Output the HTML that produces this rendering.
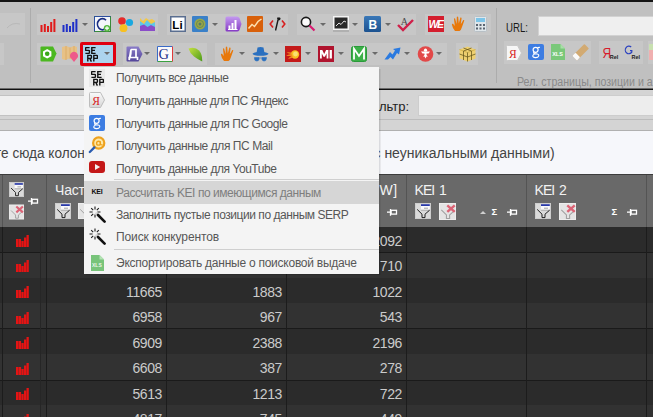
<!DOCTYPE html>
<html><head><meta charset="utf-8">
<style>
*{margin:0;padding:0;box-sizing:border-box}
html,body{width:653px;height:417px;overflow:hidden;background:#c0c0c0;font-family:"Liberation Sans",sans-serif}
.a{position:absolute}
.pn{position:absolute;background:#c7c7c7}
.arr{position:absolute;width:0;height:0;border-left:3px solid transparent;border-right:3px solid transparent;border-top:3px solid #6a6a6a}
.sep{position:absolute;width:1px;background:#acacac}
.mi{position:absolute;left:116px;font-size:12px;color:#575757;white-space:nowrap;line-height:14px}
.num{position:absolute;font-size:14px;letter-spacing:-0.4px;color:#cbcbcb;text-align:right;line-height:16px;white-space:nowrap}
.row{position:absolute;left:0;width:653px}
.vl{position:absolute;width:1px;background:#1c1c1c}
.hdv{position:absolute;width:1px;background:#545454;top:175px;height:52px}
.ht{position:absolute;color:#f2f2f2;font-size:14px;line-height:16px;white-space:nowrap;letter-spacing:-0.95px;word-spacing:1.8px}
</style></head><body>
<!-- top black line -->
<div class="a" style="left:0;top:0;width:653px;height:2px;background:#141414"></div>

<!-- toolbar -->
<div class="a" style="left:0;top:13px;width:24.5px;height:22px;background:#c7c7c7"></div><svg class="a" style="left:6px;top:20px" width="16" height="10" viewBox="0 0 16 10"><path d="M1 8 Q6 2 14 4" fill="none" stroke="#b8b8b8" stroke-width="1"/></svg>
<div class="a" style="left:0;top:43px;width:3.5px;height:21.5px;background:#c7c7c7"></div>
<div class="sep" style="left:30px;top:8px;height:75px"></div>
<div class="sep" style="left:496px;top:8px;height:75px"></div>

<div class="pn" style="left:37px;top:13.5px;width:121px;height:21.5px"></div>
<div class="pn" style="left:167px;top:13.5px;width:121px;height:21.5px"></div>
<div class="pn" style="left:297px;top:13.5px;width:119px;height:21.5px"></div>
<div class="pn" style="left:425px;top:13.5px;width:66px;height:21.5px"></div>

<div class="pn" style="left:37px;top:42.5px;width:44px;height:22.5px"></div>
<div class="pn" style="left:123px;top:42.5px;width:84px;height:22.5px"></div>
<div class="pn" style="left:215px;top:42.5px;width:232px;height:22.5px"></div>
<div class="pn" style="left:456px;top:42.5px;width:22px;height:22.5px"></div>

<!-- SERP button highlight -->
<div class="a" style="left:80px;top:42px;width:36px;height:23.5px;border:3px solid #e10010;border-radius:2px;background:#acd4ee"></div>
<!-- TOOLBAR ICONS ROW 1 -->
<svg class="a" style="left:40px;top:18px" width="16" height="14" viewBox="0 0 16 14"><path d="M0.5 7h2v7h-2z M3.8 6h2v8h-2z M7 8h2v6H7z M10.2 4h2v10h-2z M13.4 1h2v13h-2z" fill="#e01a1a"/></svg>
<svg class="a" style="left:62px;top:18px" width="16" height="14" viewBox="0 0 16 14"><path d="M0.5 7h2v7h-2z M3.8 6h2v8h-2z M7 8h2v6H7z M10.2 4h2v10h-2z M13.4 1h2v13h-2z" fill="#2030c8"/></svg>
<div class="arr" style="left:82px;top:23px"></div>
<svg class="a" style="left:94px;top:16px" width="17" height="16" viewBox="0 0 17 16"><rect x="0.5" y="0.5" width="16" height="15" fill="#f4f6fa" stroke="#3a8a3a"/><path d="M0.5 15.5V0.5H16.5" fill="none" stroke="#2d4e9e"/><path d="M12 4.2 A5 5.6 0 1 0 11.8 12.4" fill="none" stroke="#1a2c80" stroke-width="1.7"/><circle cx="13" cy="12.2" r="3.2" fill="#56b840"/><path d="M11 12.2h4M13 10.2v4" stroke="#fff" stroke-width="1.2"/></svg>
<svg class="a" style="left:117px;top:16px" width="17" height="17" viewBox="0 0 17 17"><circle cx="5" cy="5" r="3.8" fill="#e62a2a"/><circle cx="12.5" cy="6.5" r="3.6" fill="#1aa8e0"/><circle cx="6.5" cy="12.2" r="3.9" fill="#f8c020"/></svg>
<svg class="a" style="left:140px;top:17px" width="15" height="14" viewBox="0 0 15 14"><path d="M0 1 L3 4 L6 1 L9 3 L12 2 L15 4 V14 H0z" fill="#f2c84a"/><path d="M0 4 L4 7 L7 3 L11 7 L15 5 V14 H0z" fill="#5ec8e8"/><path d="M0 9 L4 7.5 L7.5 10 L11 8 L15 10 V14 H0z" fill="#8a4cc8"/></svg>

<svg class="a" style="left:170px;top:16px" width="16" height="16" viewBox="0 0 16 16"><rect x="0.75" y="0.75" width="14.5" height="14.5" fill="#fff" stroke="#5a6e90" stroke-width="1.5"/><text x="2.3" y="12.6" font-family="Liberation Sans" font-weight="bold" font-size="11.5" fill="#000" letter-spacing="0.3">Li</text></svg>
<svg class="a" style="left:192px;top:16px" width="16" height="16" viewBox="0 0 16 16"><rect x="0" y="0" width="16" height="16" rx="1" fill="#3a80c8"/><circle cx="8" cy="8" r="5.5" fill="#9aa848"/><circle cx="8" cy="8" r="3.5" fill="none" stroke="#6a8a50" stroke-width="1"/><circle cx="8" cy="8" r="1.5" fill="#5a7a60"/></svg>
<div class="arr" style="left:212px;top:23px"></div>
<svg class="a" style="left:225px;top:16px" width="17" height="16" viewBox="0 0 17 16"><defs><linearGradient id="pt" x1="0" y1="0" x2="0" y2="1"><stop offset="0" stop-color="#c49af0"/><stop offset="1" stop-color="#8438c4"/></linearGradient></defs><path d="M2 0.5 H12 Q13.5 0.5 14.5 2 L16.5 8 L14.5 14 Q13.5 15.5 12 15.5 H2 Q0.5 15.5 0.5 14 V2 Q0.5 0.5 2 0.5z" fill="url(#pt)"/><path d="M3.5 9.5h2v3.5h-2z M6.5 7h2v6h-2z M9.5 4h2v9h-2z M3 13h9.5v1H3z" fill="#fff"/></svg>
<svg class="a" style="left:247px;top:16px" width="16" height="16" viewBox="0 0 16 16"><rect width="16" height="16" rx="1" fill="#d8600a"/><path d="M1.5 12.5 L5 8.5 L7.5 10.5 L11 5.5 L14.5 3" fill="none" stroke="#fde0b0" stroke-width="1.5"/></svg>
<svg class="a" style="left:269px;top:16px" width="17" height="16" viewBox="0 0 17 16"><path d="M4 4.5 L1.2 8 L4 11.5 M13 4.5 L15.8 8 L13 11.5" fill="none" stroke="#d82020" stroke-width="1.6"/><path d="M11 1.5 Q8.5 1 8.3 3.8 L6 13.5 Q6 15 7.3 14.5 L9.6 4.5 Q11.5 4.5 11.6 2.5z" fill="#1a1a1a"/><path d="M8.2 2.2 L9.8 2.2" stroke="#1a1a1a" stroke-width="1.5"/></svg>

<svg class="a" style="left:300px;top:16px" width="16" height="16" viewBox="0 0 16 16"><circle cx="6" cy="6" r="4.6" fill="#fbfbfb" stroke="#1a1a1a" stroke-width="1.6"/><path d="M9.5 9.5 L14.5 14.5" stroke="#d81a70" stroke-width="2.2"/></svg>
<div class="arr" style="left:320px;top:23px"></div>
<svg class="a" style="left:333px;top:16px" width="16" height="16" viewBox="0 0 16 16"><rect x="0" y="14" width="16" height="2" fill="#a0a0a0" opacity="0.6"/><rect x="0.75" y="0.75" width="14.5" height="12.5" fill="#2a2a2a" stroke="#f4f4f4" stroke-width="1.5"/><path d="M3 10 L6 7 L8 8.5 L11 5 L13 6" fill="none" stroke="#e0e0e0" stroke-width="1"/></svg>
<div class="arr" style="left:352px;top:23px"></div>
<svg class="a" style="left:364px;top:16px" width="17" height="16" viewBox="0 0 17 16"><defs><linearGradient id="vk" x1="0" y1="0" x2="0" y2="1"><stop offset="0" stop-color="#3a78b8"/><stop offset="1" stop-color="#1c5290"/></linearGradient></defs><rect width="17" height="16" rx="1.5" fill="url(#vk)"/><text x="4.6" y="12.8" font-family="Liberation Sans" font-weight="bold" font-size="12" fill="#fff">B</text></svg>
<div class="arr" style="left:385px;top:23px"></div>
<svg class="a" style="left:397px;top:16px" width="17" height="16" viewBox="0 0 17 16"><text x="3.8" y="8.6" font-family="Liberation Serif" font-size="10" fill="#4a4a4a">A</text><path d="M1 9 L6 14 L16 4" fill="none" stroke="#d0204a" stroke-width="2.4"/></svg>

<svg class="a" style="left:428px;top:16px" width="16" height="16" viewBox="0 0 16 16"><rect width="16" height="16" fill="#d41e2e"/><text x="0.6" y="12" font-family="Liberation Sans" font-weight="bold" font-style="italic" font-size="10.5" fill="#fff" letter-spacing="-1.6">WE</text></svg>
<svg class="a" style="left:451px;top:16px" width="15" height="16" viewBox="0 0 15 16"><path d="M4 15 Q1.5 12 1 9 Q0.6 7.5 2 7.8 L3.8 10 L3 3 Q3 2 4 2.2 L5.6 8 L5.8 1 Q6.5 0 7.2 1 L7.8 7.6 L9.4 1.6 Q10.3 1 10.6 2 L9.8 8.3 L12.3 4 Q13.3 3.6 13.3 4.6 L11 11 Q10 14.5 8.5 15z" fill="#e8780a"/></svg>
<svg class="a" style="left:474px;top:16px" width="13" height="16" viewBox="0 0 13 16"><rect x="0.5" y="0.5" width="12" height="15" rx="1" fill="#dfe6ea" stroke="#b8c0c6"/><rect x="2" y="2" width="9" height="4" fill="#7cc4e8"/><path d="M2 8h2v2H2z M5.5 8h2v2h-2z M9 8h2v2H9z M2 11.5h2v2H2z M5.5 11.5h2v2h-2z M9 11.5h2v2H9z" fill="#5a6470"/></svg>

<!-- TOOLBAR ICONS ROW 2 -->
<svg class="a" style="left:40px;top:46px" width="17" height="16" viewBox="0 0 17 16"><path d="M1.5 0.5 H13 L16.5 7.5 L13 15.5 H1.5 Q0.5 15.5 0.5 14.5 V1.5 Q0.5 0.5 1.5 0.5z" fill="#4cb820"/><path d="M7.2 3 L11.4 5.4 V10.2 L7.2 12.6 L3 10.2 V5.4z" fill="#fff"/><circle cx="7.2" cy="7.8" r="2.3" fill="#3aa818"/></svg>
<svg class="a" style="left:61px;top:45px" width="18" height="17" viewBox="0 0 18 17"><path d="M1 2 L5 1 L9 2.5 L13 1 L16 2 V14 L12 15 L8 13.5 L4 15 L1 14z" fill="#ecc07a" opacity="0.85"/><path d="M5 1V15 M9 2.5V13.5 M13 1V15" stroke="#d8a050" stroke-width="0.8" opacity="0.7"/><path d="M13 17 L9.4 12.5 A4 4 0 1 1 16.6 12.5z" fill="#ee5a8a"/></svg>
<svg class="a" style="left:85.4px;top:46.6px" width="13" height="15"><use href="#serp"/></svg>
<div class="arr" style="left:104px;top:52px"></div>

<svg class="a" style="left:126px;top:46px" width="17" height="16" viewBox="0 0 17 16"><defs><linearGradient id="dg" x1="0" y1="0" x2="0" y2="1"><stop offset="0" stop-color="#8a7cc8"/><stop offset="1" stop-color="#54469a"/></linearGradient></defs><path d="M1.5 0.5 H12.5 L16.5 8 L12.5 15.5 H1.5 Q0.5 15.5 0.5 14.5 V1.5 Q0.5 0.5 1.5 0.5z" fill="url(#dg)"/><path d="M5 3.5 H10 V11.5 H11.5 V14 M3.2 14 V11.5 H4 Q5 9 5 3.5z M4 11.5 H10" fill="none" stroke="#fff" stroke-width="1.7"/></svg>
<div class="arr" style="left:144px;top:52px"></div>
<svg class="a" style="left:157px;top:46px" width="16" height="16" viewBox="0 0 16 16"><rect x="0.5" y="0.5" width="15" height="15" fill="#fafafa"/><path d="M0.5 15.5V0.5H15.5" fill="none" stroke="#3a6ac8"/><path d="M0.5 15.5H15.5" stroke="#3aa040"/><path d="M15.5 0.5V15.5" stroke="#e03a3a"/><text x="1.6" y="13.2" font-family="Liberation Serif" font-size="14.5" fill="#1a2e88">G</text></svg>
<div class="arr" style="left:175px;top:52px"></div>
<svg class="a" style="left:188px;top:47px" width="15" height="15" viewBox="0 0 15 15"><defs><linearGradient id="lf" x1="0" y1="0" x2="1" y2="1"><stop offset="0" stop-color="#c4e040"/><stop offset="1" stop-color="#4a9a1a"/></linearGradient></defs><path d="M0.5 1.5 Q7 -0.5 11 3.5 Q14.5 7.5 14.2 14.5 Q10 12.5 6 9.5 Q2 6.5 0.5 1.5z" fill="url(#lf)"/></svg>

<svg class="a" style="left:220px;top:46px" width="15" height="16" viewBox="0 0 15 16"><path d="M4 15 Q1.5 12 1 9 Q0.6 7.5 2 7.8 L3.8 10 L3 3 Q3 2 4 2.2 L5.6 8 L5.8 1 Q6.5 0 7.2 1 L7.8 7.6 L9.4 1.6 Q10.3 1 10.6 2 L9.8 8.3 L12.3 4 Q13.3 3.6 13.3 4.6 L11 11 Q10 14.5 8.5 15z" fill="#e8780a"/></svg>
<div class="arr" style="left:239px;top:52px"></div>
<svg class="a" style="left:252px;top:46px" width="17" height="16" viewBox="0 0 17 16"><path d="M4.5 7 L5.5 1.5 Q8.5 0.5 11.5 1.5 L12.5 7z" fill="#2a70c0"/><ellipse cx="8.5" cy="7.8" rx="8" ry="2" fill="#2a70c0"/><path d="M2.5 11.5 H7 V13.5 Q6.5 15 4.8 15 Q2.8 15 2.5 13z M10 11.5 H14.5 L14.3 13 Q14 15 12.2 15 Q10.5 15 10 13.5z M7 12 H10" fill="#2a70c0" stroke="#2a70c0" stroke-width="0.6"/></svg>
<div class="arr" style="left:273px;top:52px"></div>
<svg class="a" style="left:285px;top:46px" width="16" height="16" viewBox="0 0 16 16"><rect width="16" height="16" fill="#c41a1a"/><circle cx="10" cy="8.5" r="4.2" fill="#f8c020"/><circle cx="10.5" cy="8" r="2.4" fill="#fce070"/><path d="M6 6.5 Q3.5 6 1.5 6.5 Q4 7.5 6 8 Q3 8.5 1 10 Q4 10 6.3 10 Q4 11.5 3 13 Q6 12 8 11.5" fill="#f08a20"/></svg>
<div class="arr" style="left:305px;top:52px"></div>
<svg class="a" style="left:318px;top:46px" width="16" height="16" viewBox="0 0 16 16"><rect width="16" height="16" fill="#b0142e"/><path d="M2 12.5 V4 H4.3 L6.2 8 L8.1 4 H10.4 V12.5 H8.6 V7.5 L6.9 10.8 H5.5 L3.8 7.5 V12.5z M11.6 4 H13.9 V12.5 H11.6z" fill="#fff"/></svg>
<div class="arr" style="left:338px;top:52px"></div>
<svg class="a" style="left:351px;top:46px" width="16" height="16" viewBox="0 0 16 16"><rect x="0.5" y="0.5" width="15" height="15" rx="2" fill="#3cb048" stroke="#2a9a3a"/><path d="M3 13.5 V2.8 L8 10 L13 2.8 V13.5" fill="none" stroke="#fff" stroke-width="1.8"/></svg>
<div class="arr" style="left:372px;top:52px"></div>
<svg class="a" style="left:384px;top:47px" width="17" height="13" viewBox="0 0 17 13"><path d="M0.5 12.5 L6 5 L8.5 7.5 L11 3.5 L9 2 L16.5 0.5 L15 7.5 L13 6 L9 12.5 L6.5 10 L4 12.5z" fill="#2a7ae0"/></svg>
<div class="arr" style="left:404px;top:52px"></div>
<svg class="a" style="left:417px;top:46px" width="17" height="16" viewBox="0 0 17 16"><circle cx="8.5" cy="8" r="7.8" fill="#e24848"/><path d="M4 5.5 H13 L11.5 7.5 H9.5 V9 L11 10.5 H9.5 L8.5 12.5 L7.5 10.5 H6 L7.5 9 V7.5 H5.5z" fill="#fff"/><circle cx="8.5" cy="4.2" r="1.6" fill="#fff"/></svg>
<div class="arr" style="left:436px;top:52px"></div>
<svg class="a" style="left:459px;top:46px" width="17" height="16" viewBox="0 0 17 16"><path d="M8.5 0.5 L16.5 3.5 V12.5 L8.5 15.5 L0.5 12.5 V3.5z" fill="#efd070"/><path d="M0.5 3.5 L8.5 6.5 L16.5 3.5" fill="none" stroke="#c8a840" stroke-width="0.7"/><path d="M4.5 2 L12.5 5 V14 M12.5 2 L4.5 5 V14 M0.5 8 L8.5 11 L16.5 8 M8.5 6.5 V15.5" fill="none" stroke="#6a5a20" stroke-width="0.8"/></svg>

<!-- right group -->
<div class="a" style="left:505.5px;top:20.5px;font-size:13px;color:#1a1a1a;line-height:14px;white-space:nowrap;transform:scaleX(0.74);transform-origin:0 0">URL:</div>
<div class="a" style="left:537.5px;top:15.5px;width:120px;height:20.5px;background:#efefef;border:1px solid #d2d2d2"></div>
<div class="pn" style="left:504px;top:41px;width:87px;height:23px"></div>
<div class="pn" style="left:599px;top:41px;width:44px;height:23px"></div>
<div class="pn" style="left:648px;top:41px;width:10px;height:23px"></div>
<div class="a" style="left:517px;top:75px;font-size:12px;color:#8a8a8a;line-height:14px;white-space:nowrap;transform:scaleX(0.885);transform-origin:0 0">Рел. страницы, позиции и а</div>

<!-- right group icons -->
<svg class="a" style="left:506px;top:45px" width="16" height="16" viewBox="0 0 16 16"><path d="M1.5 0.5 H11.5 L15.5 8 L11.5 15.5 H1.5 Q0.5 15.5 0.5 14.5 V1.5 Q0.5 0.5 1.5 0.5z" fill="#f6f6f6" stroke="#c8c8c8"/><text x="3" y="12.5" font-family="Liberation Serif" font-size="11.5" fill="#d82020">Я</text></svg>
<svg class="a" style="left:528px;top:44px" width="16" height="16" viewBox="0 0 16 16"><rect width="16" height="16" rx="2" fill="#3d7de2"/><circle cx="7.6" cy="5.8" r="2.5" fill="none" stroke="#fff" stroke-width="1.2"/><path d="M9.6 3.6 L12 3.2" stroke="#fff" stroke-width="1.1"/><path d="M6.2 7.9 Q4.8 9 6.6 9.6 L9.2 10 Q11.2 10.5 10.6 12.2 Q9.8 13.8 7.4 13.6 Q4.6 13.4 4.8 11.8 Q5 10.6 6.6 10" fill="none" stroke="#fff" stroke-width="1.15"/></svg>
<svg class="a" style="left:551px;top:44px" width="14" height="16" viewBox="0 0 14 16"><path d="M0 0 H9.5 L14 4.5 V16 H0z" fill="#7ac87a"/><path d="M9.5 0 V4.5 H14" fill="#a8e0a8"/><text x="1.2" y="11.5" font-family="Liberation Sans" font-weight="bold" font-size="5.5" fill="#fff">XLS</text></svg>
<svg class="a" style="left:571px;top:43px" width="19" height="18" viewBox="0 0 19 18"><g transform="rotate(-45 9.5 9)"><rect x="1" y="6" width="17" height="6.5" rx="0.8" fill="#d2aa72"/><rect x="1" y="6" width="4.5" height="6.5" rx="0.8" fill="#fafafa"/></g></svg>
<svg class="a" style="left:602px;top:44px" width="17" height="16" viewBox="0 0 17 16"><text x="0.5" y="14.5" font-family="Liberation Sans" font-size="15" fill="#d81a2a" transform="scale(0.8 1)">Я</text><text x="7.8" y="15.2" font-family="Liberation Sans" font-weight="bold" font-size="5.5" fill="#222">Rel</text></svg>
<svg class="a" style="left:624px;top:44px" width="17" height="16" viewBox="0 0 17 16"><path d="M7.2 3 A3.6 3.8 0 1 0 7.8 8.2 V6.6 H6" fill="none" stroke="#2a40c0" stroke-width="1.2"/><text x="7.5" y="15.2" font-family="Liberation Sans" font-weight="bold" font-size="5.5" fill="#222">Rel</text></svg>
<svg class="a" style="left:649px;top:44px" width="6" height="16" viewBox="0 0 6 16"><rect width="6" height="16" fill="#c8e0b0"/><rect y="6" width="6" height="10" fill="#f0b0b0"/></svg>

<!-- black line under toolbar -->
<div class="a" style="left:0;top:88px;width:653px;height:1px;background:#6a6a6a"></div><div class="a" style="left:0;top:89px;width:653px;height:1px;background:#111"></div>

<!-- filter row -->
<div class="a" style="left:0;top:90px;width:653px;height:41px;background:#d4d4d4"></div>
<div class="a" style="left:-2px;top:95px;width:92px;height:21px;background:#efefef;border:1px solid #c2c2c2"></div>
<div class="a" style="left:379px;top:100px;font-size:13px;color:#1e1e1e;line-height:14px">льтр:</div>
<div class="a" style="left:417.5px;top:95px;width:240px;height:21px;background:#ededed;border:1px solid #cdcdcd"></div>
<div class="a" style="left:0;top:119px;width:653px;height:1px;background:#bcbcbc"></div>
<div class="a" style="left:0;top:130px;width:653px;height:1px;background:#b0b0b0"></div>

<!-- group panel -->
<div class="a" style="left:0;top:131px;width:653px;height:43px;background:#f6f7fb"></div>
<div class="a" style="left:-5px;top:145px;font-size:14px;color:#444;line-height:16px;white-space:nowrap;transform:scaleX(0.97);transform-origin:0 0">те сюда колонку</div>
<div class="a" style="left:373.5px;top:145px;font-size:14px;color:#444;line-height:16px;white-space:nowrap">с неуникальными данными)</div>

<!-- grid header -->
<div class="a" style="left:0;top:174px;width:653px;height:53px;background:#696969"></div>
<div class="a" style="left:0;top:174px;width:653px;height:1px;background:#3c3c3c"></div>
<div class="hdv" style="left:2px"></div>
<div class="hdv" style="left:46px"></div>
<div class="hdv" style="left:166px"></div>
<div class="hdv" style="left:286px"></div>
<div class="hdv" style="left:406px"></div>
<div class="hdv" style="left:526px"></div>
<div class="hdv" style="left:646px"></div>
<div class="ht" style="left:55px;top:181.5px;letter-spacing:-0.2px">Частота</div>
<div class="ht" style="left:379.5px;top:181.5px;letter-spacing:0.6px">W]</div>
<div class="ht" style="left:414.5px;top:181.5px">KEI 1</div>
<div class="ht" style="left:534.5px;top:181.5px">KEI 2</div>

<!-- grid body -->
<div class="a" style="left:0;top:227px;width:653px;height:190px;background:#2b2b2b"></div>
<div class="row" style="top:252px;height:26px;background:#323232"></div>
<div class="row" style="top:303px;height:26px;background:#323232"></div>
<div class="row" style="top:354px;height:26px;background:#323232"></div>
<div class="row" style="top:405px;height:12px;background:#323232"></div>
<div class="row" style="top:252px;height:1px;background:#1a1a1a"></div>
<div class="row" style="top:328px;height:1px;background:#1a1a1a"></div>
<div class="row" style="top:380px;height:1px;background:#1a1a1a"></div>
<div class="vl" style="left:2px;top:227px;height:190px"></div>
<div class="vl" style="left:40px;top:227px;height:190px;background:#262626"></div>
<div class="vl" style="left:46px;top:227px;height:190px"></div>
<div class="vl" style="left:166px;top:227px;height:190px"></div>
<div class="vl" style="left:286px;top:227px;height:190px"></div>
<div class="vl" style="left:406px;top:227px;height:190px"></div>
<div class="vl" style="left:526px;top:227px;height:190px"></div>
<div class="vl" style="left:646px;top:227px;height:190px"></div>

<svg width="0" height="0" style="position:absolute">
<defs>
<symbol id="f1" viewBox="0 0 16 16"><rect x="0.5" y="0.5" width="15" height="15" fill="#dadada" stroke="#cdcdcd"/><rect x="6" y="1.2" width="8.8" height="6" fill="#fafafa"/><rect x="6" y="1.2" width="8.8" height="1.8" fill="#2a3aa8"/><path d="M9 5.2 H13" stroke="#8a8a8a" stroke-width="0.8"/><path d="M6 7.2 H14.8" stroke="#9a9a9a" stroke-width="0.8"/><path d="M2.2 6.4 L7 11.2 V14.6 H10 V11.2 L14.6 7.2" fill="none" stroke="#1e1e1e" stroke-width="1"/></symbol>
<symbol id="f2" viewBox="0 0 16 16"><rect x="0.5" y="0.5" width="15" height="15" fill="#e4e4e4" stroke="#ededed"/><path d="M2.2 6.4 L7 11.2 V14.6 H10 V11.2 L14.6 7.2" fill="none" stroke="#a0a0a0" stroke-width="1"/><path d="M7.8 2.2 L14.8 8.4 M14.8 2.2 L7.8 8.4" stroke="#dc6476" stroke-width="2.3"/></symbol>
<symbol id="pin" viewBox="0 0 11 7"><path d="M0 3.2 H3.5 M3.5 0 V6.8" stroke="#fff" stroke-width="1.3"/><rect x="4.1" y="1.3" width="5.4" height="3.8" fill="none" stroke="#fff" stroke-width="1.3"/></symbol>
<symbol id="rb" viewBox="0 0 13 12"><path d="M0 4h2.4v8H0z M2.7 4h2.4v8H2.7z M5.4 6h2.3v6H5.4z M8 2.5h2.2V12H8z M10.5 0h2.3v12h-2.3z" fill="#e41414"/></symbol>
</defs></svg>
<svg class="a" style="left:16px;top:235.0px" width="13" height="12"><use href="#rb"/></svg>
<svg class="a" style="left:16px;top:260.0px" width="13" height="12"><use href="#rb"/></svg>
<svg class="a" style="left:16px;top:286.0px" width="13" height="12"><use href="#rb"/></svg>
<svg class="a" style="left:16px;top:311.5px" width="13" height="12"><use href="#rb"/></svg>
<svg class="a" style="left:16px;top:337.0px" width="13" height="12"><use href="#rb"/></svg>
<svg class="a" style="left:16px;top:362.5px" width="13" height="12"><use href="#rb"/></svg>
<svg class="a" style="left:16px;top:388.0px" width="13" height="12"><use href="#rb"/></svg>
<svg class="a" style="left:16px;top:413.5px" width="13" height="12"><use href="#rb"/></svg>
<div class="num" style="left:342px;width:60px;top:232.5px">2092</div>
<div class="num" style="left:342px;width:60px;top:257.5px">710</div>
<div class="num" style="left:102px;width:60px;top:283.5px">11665</div>
<div class="num" style="left:222px;width:60px;top:283.5px">1883</div>
<div class="num" style="left:342px;width:60px;top:283.5px">1022</div>
<div class="num" style="left:102px;width:60px;top:309.0px">6958</div>
<div class="num" style="left:222px;width:60px;top:309.0px">967</div>
<div class="num" style="left:342px;width:60px;top:309.0px">543</div>
<div class="num" style="left:102px;width:60px;top:334.5px">6909</div>
<div class="num" style="left:222px;width:60px;top:334.5px">2388</div>
<div class="num" style="left:342px;width:60px;top:334.5px">2196</div>
<div class="num" style="left:102px;width:60px;top:360.0px">6608</div>
<div class="num" style="left:222px;width:60px;top:360.0px">387</div>
<div class="num" style="left:342px;width:60px;top:360.0px">278</div>
<div class="num" style="left:102px;width:60px;top:385.5px">5613</div>
<div class="num" style="left:222px;width:60px;top:385.5px">1213</div>
<div class="num" style="left:342px;width:60px;top:385.5px">722</div>
<div class="num" style="left:102px;width:60px;top:411.0px">4817</div>
<div class="num" style="left:222px;width:60px;top:411.0px">745</div>
<div class="num" style="left:342px;width:60px;top:411.0px">449</div>
<svg class="a" style="left:9px;top:182px" width="15" height="15"><use href="#f1"/></svg>
<svg class="a" style="left:9px;top:204px" width="15" height="16"><use href="#f2"/></svg>
<svg class="a" style="left:28px;top:197.5px" width="11" height="7"><use href="#pin"/></svg>
<svg class="a" style="left:55px;top:203px" width="16" height="16"><use href="#f1"/></svg>
<svg class="a" style="left:78px;top:203px" width="16" height="16"><use href="#f2"/></svg>
<svg class="a" style="left:387px;top:209px" width="11" height="7"><use href="#pin"/></svg>
<svg class="a" style="left:415px;top:203px" width="16" height="16"><use href="#f1"/></svg>
<svg class="a" style="left:438.5px;top:202.5px" width="17" height="17"><use href="#f2"/></svg>
<div class="a" style="left:480px;top:211px;width:0;height:0;border-left:3.5px solid transparent;border-right:3.5px solid transparent;border-bottom:3.5px solid #d0d0d0"></div>
<div class="a" style="left:491.5px;top:207px;font-size:9.5px;color:#fff;font-weight:bold;line-height:10px">Σ</div>
<svg class="a" style="left:507px;top:209px" width="11" height="7"><use href="#pin"/></svg>
<svg class="a" style="left:535px;top:203px" width="16" height="16"><use href="#f1"/></svg>
<svg class="a" style="left:558.5px;top:202.5px" width="17" height="17"><use href="#f2"/></svg>
<div class="a" style="left:611.5px;top:207px;font-size:9.5px;color:#fff;font-weight:bold;line-height:10px">Σ</div>
<svg class="a" style="left:627px;top:209px" width="11" height="7"><use href="#pin"/></svg>

<!-- menu -->
<div class="a" style="left:379px;top:69px;width:2px;height:206px;background:linear-gradient(90deg,rgba(0,0,0,0.14),rgba(0,0,0,0.03))"></div><div class="a" style="left:86px;top:274px;width:294px;height:1px;background:rgba(0,0,0,0.12)"></div>
<div class="a" style="left:84px;top:67px;width:295px;height:207px;background:#f4f4f4"></div>
<div class="a" style="left:84px;top:181px;width:295px;height:23px;background:#d6d6d6"></div>
<div class="a" style="left:114px;top:179px;width:265px;height:1px;background:#cfcfcf"></div>
<div class="a" style="left:114px;top:249px;width:265px;height:1px;background:#cfcfcf"></div>
<div class="mi" style="top:71.3px;letter-spacing:-0.43px">Получить все данные</div>
<div class="mi" style="top:93.9px;letter-spacing:-0.5px">Получить данные для ПС Яндекс</div>
<div class="mi" style="top:116.5px;letter-spacing:-0.46px">Получить данные для ПС Google</div>
<div class="mi" style="top:139.1px;letter-spacing:-0.43px">Получить данные для ПС Mail</div>
<div class="mi" style="top:161.7px;letter-spacing:-0.45px">Получить данные для YouTube</div>
<div class="mi" style="top:185.8px;color:#7e7e7e;letter-spacing:-0.45px">Рассчитать KEI по имеющимся данным</div>
<div class="mi" style="top:207.8px;letter-spacing:-0.45px">Заполнить пустые позиции по данным SERP</div>
<div class="mi" style="top:230px;letter-spacing:-0.11px">Поиск конкурентов</div>
<div class="mi" style="top:255.5px;letter-spacing:-0.25px">Экспортировать данные о поисковой выдаче</div>


<!-- MENU ICONS -->
<svg width="0" height="0" style="position:absolute"><defs>
<symbol id="serp" viewBox="0 0 13 15"><path d="M4.6 0.6 H1.2 Q0.6 0.6 0.6 1.2 V2.8 Q0.6 3.4 1.2 3.4 H3.8 Q4.4 3.4 4.4 4 V5.8 Q4.4 6.4 3.8 6.4 H0.4 M10.6 0.6 H6.8 V6.4 H10.6 M6.8 3.4 H10 M2.8 14.6 V8.4 H5.8 Q6.4 8.4 6.4 9 V10.8 Q6.4 11.4 5.8 11.4 H2.8 M4.8 11.4 L6.4 14.6 M8.8 14.6 V8.4 H11.8 Q12.4 8.4 12.4 9 V10.8 Q12.4 11.4 11.8 11.4 H8.8" fill="none" stroke="#111" stroke-width="1.4"/></symbol>
<symbol id="wand" viewBox="0 0 17 17"><path d="M6 0.5 V3.6 M6 8.4 V11.5 M0.5 6 H3.6 M8.4 6 H11.5 M2.2 2.2 L4.2 4.2 M9.8 2.2 L7.8 4.2 M2.2 9.8 L4.2 7.8" stroke="#1a1a1a" stroke-width="1.1"/><path d="M6.6 6.6 L9 9" stroke="#d8d8d8" stroke-width="2.6"/><path d="M9 9 L15.6 15.6" stroke="#111" stroke-width="2.6" stroke-linecap="round"/></symbol>
</defs></svg>
<div class="a" style="left:89px;top:69px;width:16px;height:18px;background:#e9e9e9"></div>
<svg class="a" style="left:90.5px;top:70.8px" width="13" height="15"><use href="#serp"/></svg>
<svg class="a" style="left:89px;top:92px" width="16" height="16" viewBox="0 0 16 16"><defs><linearGradient id="yg" x1="0" y1="0" x2="0" y2="1"><stop offset="0" stop-color="#fafafa"/><stop offset="1" stop-color="#d6d6d6"/></linearGradient></defs><path d="M1.5 0.5 H11.5 L15.5 8 L11.5 15.5 H1.5 Q0.5 15.5 0.5 14.5 V1.5 Q0.5 0.5 1.5 0.5z" fill="url(#yg)" stroke="#bdbdbd"/><text x="3.3" y="13" font-family="Liberation Serif" font-size="11.5" fill="#d81818">Я</text></svg>
<svg class="a" style="left:89px;top:115px" width="16" height="16" viewBox="0 0 16 16"><rect width="16" height="16" rx="2" fill="#3d7de2"/><circle cx="7.6" cy="5.8" r="2.5" fill="none" stroke="#fff" stroke-width="1.2"/><path d="M9.6 3.6 L12 3.2" stroke="#fff" stroke-width="1.1"/><path d="M6.2 7.9 Q4.8 9 6.6 9.6 L9.2 10 Q11.2 10.5 10.6 12.2 Q9.8 13.8 7.4 13.6 Q4.6 13.4 4.8 11.8 Q5 10.6 6.6 10" fill="none" stroke="#fff" stroke-width="1.15"/></svg>
<svg class="a" style="left:88px;top:135px" width="18" height="19" viewBox="0 0 18 19"><circle cx="10.7" cy="8" r="5.6" fill="#fde8a8" stroke="#eea21e" stroke-width="2.2"/><circle cx="10.5" cy="8.2" r="1.9" fill="none" stroke="#eea21e" stroke-width="1.4"/><path d="M12.4 6.2 V9.2 Q13 10.4 14.4 9.4" fill="none" stroke="#eea21e" stroke-width="1.1"/><path d="M6.4 12.4 L1.8 17" stroke="#2a5cb0" stroke-width="2.3" stroke-linecap="round"/></svg>
<svg class="a" style="left:89px;top:161px" width="16" height="12" viewBox="0 0 16 12"><rect width="16" height="12" rx="3" fill="#c41818"/><path d="M6 3 L11.2 6 L6 9z" fill="#f2f2f2"/></svg>
<div class="a" style="left:91.5px;top:188px;font-size:7px;font-weight:bold;color:#111;line-height:8px;letter-spacing:-0.2px">KEI</div>
<svg class="a" style="left:89px;top:206px" width="17" height="17"><use href="#wand"/></svg>
<svg class="a" style="left:89px;top:228px" width="17" height="17"><use href="#wand"/></svg>
<svg class="a" style="left:91px;top:255px" width="13" height="16" viewBox="0 0 13 16"><path d="M0 0 H8.5 L13 4.5 V16 H0z" fill="#78c47a"/><path d="M8.5 0 V4.5 H13z" fill="#b4e2b4"/><text x="1" y="12" font-family="Liberation Sans" font-weight="bold" font-size="5" fill="#eaf6ea">XLS</text></svg>

</body></html>
